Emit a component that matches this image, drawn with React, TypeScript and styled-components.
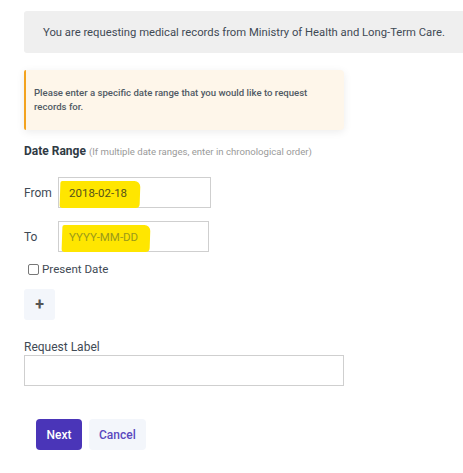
import styled, { createGlobalStyle } from "styled-components";

const GlobalStyle = createGlobalStyle`
  html, body {
    margin: 0;
    padding: 0;
    background: #ffffff;
    overflow: hidden;
  }
  body {
    font-family: Roboto, "Liberation Sans", Arial, sans-serif;
    color: #444;
  }
`;

const Page = styled.div`
  padding: 11px 0 0 24px;
  display: flex;
  flex-direction: column;
`;

const Banner = styled.div`
  background-color: #efefef;
  border-radius: 3px 0 0 3px;
  height: 42px;
  display: flex;
  align-items: center;
  padding-left: 19px;
  font-size: 11.25px;
  white-space: nowrap;
  color: #3f4a55;
`;

const Notice = styled.div`
  margin-top: 17px;
  width: 320px;
  box-sizing: border-box;
  background-color: #fef6ea;
  border-left: 2px solid #f3a31f;
  border-radius: 2px 4px 4px 2px;
  box-shadow: 0 2px 8px rgba(0, 0, 0, 0.08);
  padding: 16px 14px 16px 8px;
  font-size: 9.6px;
  font-weight: 500;
  line-height: 14px;
  color: #505a64;
`;

const SectionTitle = styled.div`
  margin-top: 14px;
  font-size: 12px;
  font-weight: 700;
  color: #2f3a44;
  display: flex;
  align-items: baseline;
  gap: 3px;
`;

const Hint = styled.span`
  font-size: 9.6px;
  font-weight: 400;
  color: #9a9a9a;
`;

const DateRow = styled.div<{ $top: number }>`
  margin-top: ${({ $top }) => $top}px;
  display: flex;
  align-items: center;
`;

const RowLabel = styled.label`
  width: 34px;
  font-size: 12px;
  color: #3f4a55;
`;

const DateField = styled.div<{ $width: number }>`
  position: relative;
  width: ${({ $width }) => $width}px;
  height: 31px;
  box-sizing: border-box;
  border: 1px solid #cfcfcf;
  display: flex;
  align-items: center;
`;

const Highlight = styled.span<{ $left: number; $width: number }>`
  position: absolute;
  left: ${({ $left }) => $left}px;
  top: 3px;
  bottom: -1px;
  width: ${({ $width }) => $width}px;
  background-color: #ffe600;
  border-radius: 2px 6px 4px 3px;
  transform: skewX(-2deg);
`;

const DateText = styled.span<{ $placeholder?: boolean }>`
  position: relative;
  padding-left: 10px;
  font-size: 11.5px;
  color: ${({ $placeholder }) => ($placeholder ? "#9b9a1a" : "#55521a")};
`;

const CheckRow = styled.label`
  margin-top: 10px;
  margin-left: 4px;
  display: flex;
  align-items: center;
  gap: 3px;
  font-size: 11.6px;
  color: #3f4a55;
`;

const Box = styled.span`
  width: 9px;
  height: 9px;
  border: 1px solid #777;
  border-radius: 2px;
  background: #fff;
`;

const AddButton = styled.button`
  margin-top: 13px;
  width: 31px;
  height: 31px;
  border: none;
  border-radius: 3px;
  background-color: #f3f6fb;
  color: #555;
  font-family: inherit;
  font-size: 16px;
  font-weight: 700;
  padding: 0;
  display: flex;
  align-items: center;
  justify-content: center;
`;

const FieldLabel = styled.div`
  margin-top: 20px;
  font-size: 12px;
  line-height: 14px;
  color: #3f4a55;
`;

const TextInput = styled.div`
  margin-top: 1px;
  width: 320px;
  height: 31px;
  box-sizing: border-box;
  border: 1px solid #cfcfcf;
`;

const Actions = styled.div`
  margin-top: 33px;
  margin-left: 12px;
  display: flex;
  gap: 7px;
`;

const Button = styled.button<{ $primary?: boolean }>`
  height: 31px;
  padding: 0 ${({ $primary }) => ($primary ? 10.5 : 10)}px;
  border: none;
  border-radius: 4px;
  font-family: inherit;
  font-size: 12px;
  font-weight: 500;
  background-color: ${({ $primary }) => ($primary ? "#4a35b8" : "#f3f6fb")};
  color: ${({ $primary }) => ($primary ? "#ffffff" : "#5b49bf")};
`;

export default function App() {
  return (
    <>
      <GlobalStyle />
      <Page>
        <Banner>
          You are requesting medical records from Ministry of Health and
          Long-Term Care.
        </Banner>
        <Notice>
          Please enter a specific date range that you would like to request
          records for.
        </Notice>
        <SectionTitle>
          Date Range <Hint>(If multiple date ranges, enter in chronological order)</Hint>
        </SectionTitle>
        <DateRow $top={19}>
          <RowLabel>From</RowLabel>
          <DateField $width={153}>
            <Highlight $left={1} $width={80} />
            <DateText>2018-02-18</DateText>
          </DateField>
        </DateRow>
        <DateRow $top={13}>
          <RowLabel>To</RowLabel>
          <DateField $width={151}>
            <Highlight $left={3} $width={88} />
            <DateText $placeholder>YYYY-MM-DD</DateText>
          </DateField>
        </DateRow>
        <CheckRow>
          <Box />
          Present Date
        </CheckRow>
        <AddButton>+</AddButton>
        <FieldLabel>Request Label</FieldLabel>
        <TextInput />
        <Actions>
          <Button $primary>Next</Button>
          <Button>Cancel</Button>
        </Actions>
      </Page>
    </>
  );
}
